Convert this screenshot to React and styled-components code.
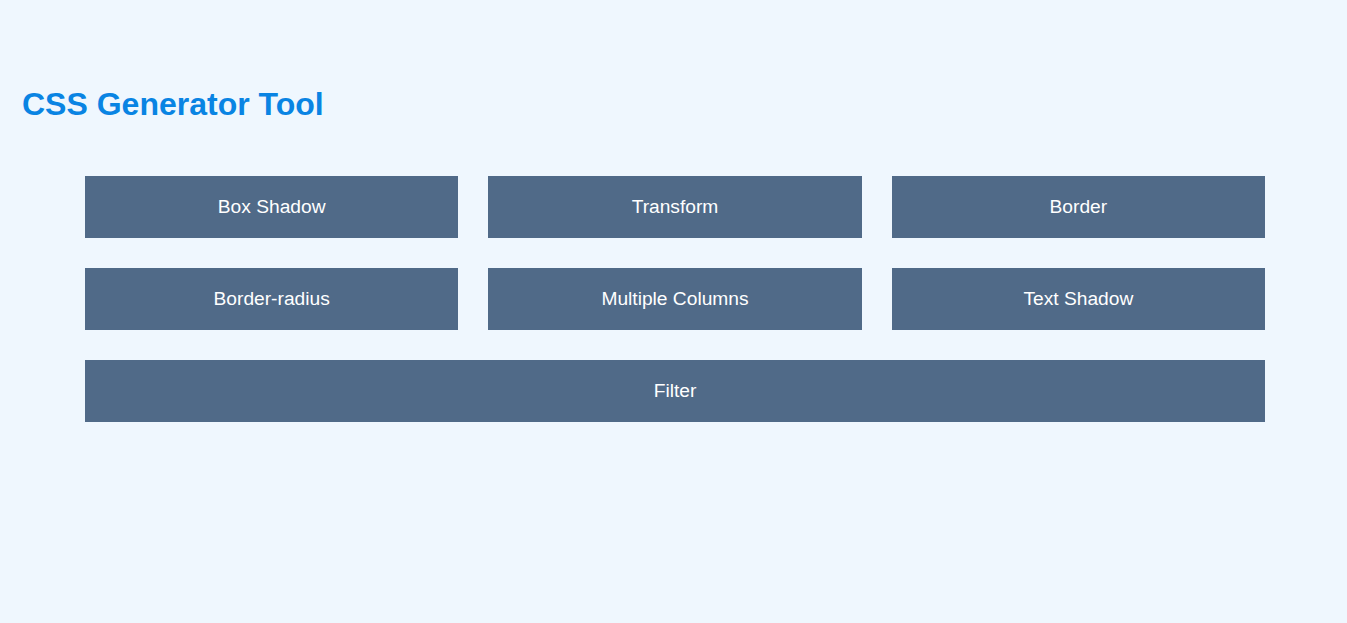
import React from "react";
import styled, { createGlobalStyle } from "styled-components";

const Global = createGlobalStyle`
  html, body {
    margin: 0;
    padding: 0;
    background: #eff7fe;
    font-family: "Liberation Sans", Arial, sans-serif;
  }
`;

const Page = styled.div`
  min-height: 623px;
  padding: 86px 0 0 22px;
  box-sizing: border-box;
`;

const Title = styled.h1`
  margin: 0;
  font-size: 32px;
  font-weight: 700;
  line-height: 37px;
  color: #0984e3;
`;

const Grid = styled.div`
  display: grid;
  grid-template-columns: repeat(3, 1fr);
  gap: 30px;
  width: 1180px;
  margin: 53px 0 0 63px;
`;

const Tile = styled.button`
  grid-column: ${(p) => (p.$wide ? "1 / -1" : "auto")};
  height: 62px;
  border: none;
  background: #506a88;
  color: #ffffff;
  font-family: "Liberation Sans", Arial, sans-serif;
  font-size: 19.2px;
  display: flex;
  align-items: center;
  justify-content: center;
  cursor: pointer;
  padding: 0;
`;

const items = [
  "Box Shadow",
  "Transform",
  "Border",
  "Border-radius",
  "Multiple Columns",
  "Text Shadow",
];

export default function App() {
  return (
    <Page>
      <Global />
      <Title>CSS Generator Tool</Title>
      <Grid>
        {items.map((t) => (
          <Tile key={t}>{t}</Tile>
        ))}
        <Tile $wide>Filter</Tile>
      </Grid>
    </Page>
  );
}
